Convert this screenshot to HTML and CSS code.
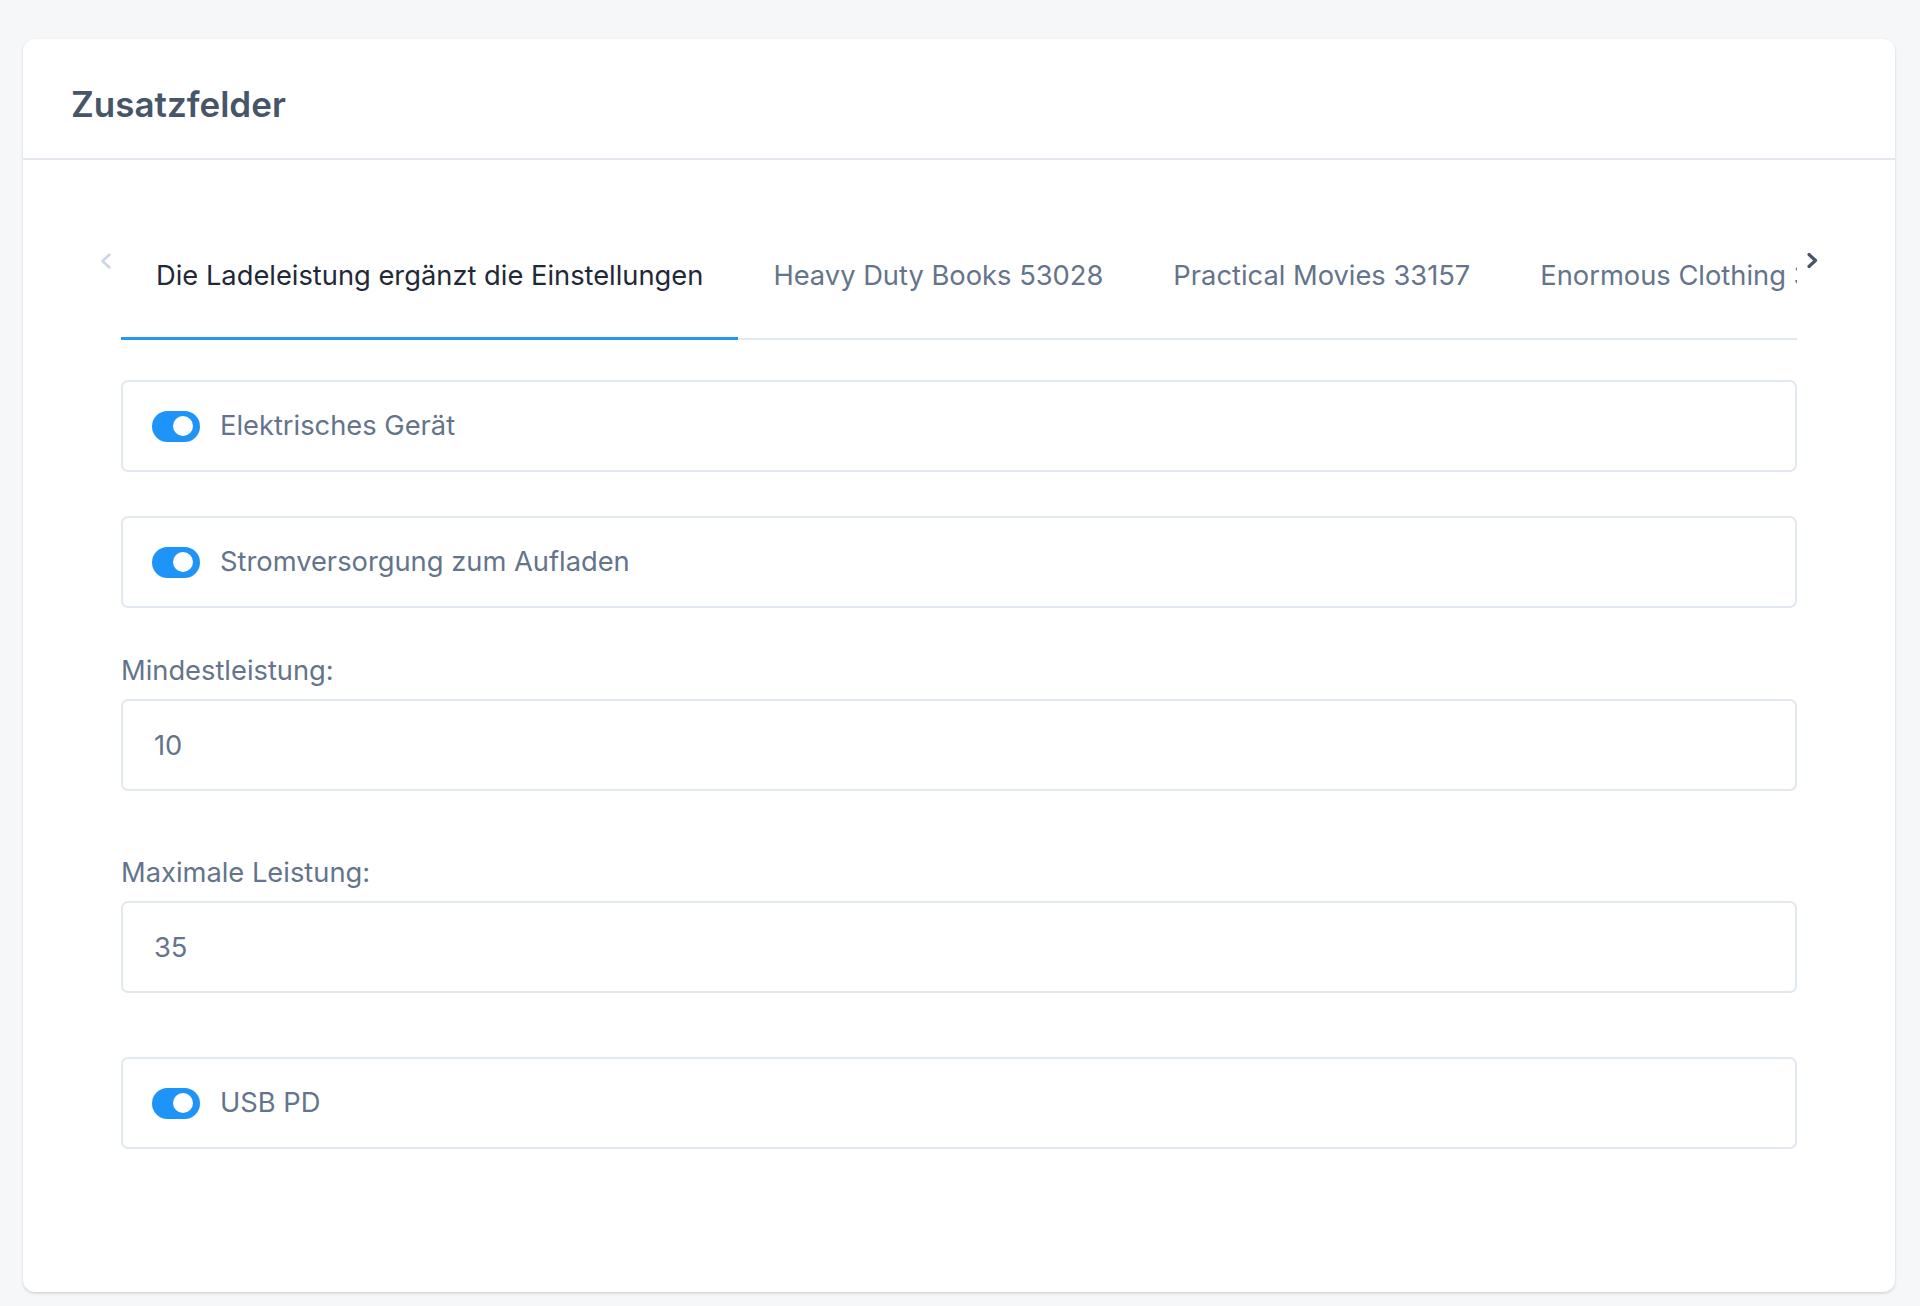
FILE: index.html
```html
<!DOCTYPE html>
<html lang="de">
<head>
<meta charset="utf-8">
<title>Zusatzfelder</title>
<link rel="stylesheet" href="styles.css">
</head>
<body>
<div class="page">
  <section class="card">
    <header class="card-header">
      <h2 class="card-title">Zusatzfelder</h2>
    </header>
    <div class="card-body">
      <div class="tabs">
        <button class="tab-arrow tab-arrow-prev" type="button" aria-label="Zurück">
          <svg width="14" height="18" viewBox="0 0 14 18"><polyline points="10.5,2.5 3.5,9 10.5,15.5" fill="none" stroke="currentColor" stroke-width="2.4" stroke-linecap="round" stroke-linejoin="round"/></svg>
        </button>
        <div class="tab-strip">
          <div class="tab active">Die Ladeleistung ergänzt die Einstellungen</div>
          <div class="tab">Heavy Duty Books 53028</div>
          <div class="tab">Practical Movies 33157</div>
          <div class="tab">Enormous Clothing 31942</div>
        </div>
        <button class="tab-arrow tab-arrow-next" type="button" aria-label="Weiter">
          <svg width="12" height="18" viewBox="0 0 12 18"><polyline points="3,2.5 9.5,8.5 3,14.5" fill="none" stroke="currentColor" stroke-width="3.2" stroke-linecap="round" stroke-linejoin="round"/></svg>
        </button>
      </div>

      <div class="switch-box">
        <span class="switch on"><span class="knob"></span></span>
        <span class="switch-label">Elektrisches Gerät</span>
      </div>

      <div class="switch-box">
        <span class="switch on"><span class="knob"></span></span>
        <span class="switch-label">Stromversorgung zum Aufladen</span>
      </div>

      <div class="field">
        <label class="field-label">Mindestleistung:</label>
        <input class="field-input" type="text" value="10">
      </div>

      <div class="field field-last">
        <label class="field-label">Maximale Leistung:</label>
        <input class="field-input" type="text" value="35">
      </div>

      <div class="switch-box last">
        <span class="switch on"><span class="knob"></span></span>
        <span class="switch-label">USB PD</span>
      </div>
    </div>
  </section>
</div>
</body>
</html>
```

FILE: styles.css
```css
* { box-sizing: border-box; }

html, body {
  margin: 0;
  padding: 0;
  background: #f6f7f9;
  font-family: Inter, "Noto Sans", "Liberation Sans", sans-serif;
}

.page {
  padding: 39px 25px 16px 23px;
}

.card {
  background: #ffffff;
  border-radius: 12px;
  box-shadow: 0 1px 3px rgba(15, 23, 42, 0.12), 0 2px 3px rgba(15, 23, 42, 0.05);
}

.card-header {
  height: 121px;
  padding: 44px 48px 0;
  border-bottom: 2px solid #e5e9ef;
}

.card-title {
  margin: 0;
  font-size: 35px;
  line-height: 42px;
  font-weight: 600;
  color: #475569;
}

.card-body {
  padding: 94px 98px 143px;
}

/* Tabs */
.tabs {
  display: flex;
  margin: 0 -30px 40px;
}

.tab-arrow {
  flex: 0 0 30px;
  align-self: flex-start;
  margin-top: -2px;
  padding: 0;
  border: 0;
  background: none;
  display: flex;
  justify-content: center;
  height: 20px;
}

.tab-arrow-prev { color: #cbd5e1; }
.tab-arrow-next { color: #475569; }

.tab-strip {
  flex: 1;
  display: flex;
  overflow: hidden;
  box-shadow: inset 0 -2px 0 #e2e8f0;
}

.tab {
  flex: 0 0 auto;
  padding: 1px 35px 40px;
  font-size: 27.3px;
  line-height: 42px;
  color: #64748b;
  white-space: nowrap;
  border-bottom: 3px solid transparent;
}

.tab.active {
  color: #1f2937;
  border-bottom-color: #2196f3;
}

/* Switch rows */
.switch-box {
  display: flex;
  align-items: center;
  height: 92px;
  padding: 0 29px;
  border: 2px solid #e2e8f0;
  border-radius: 7px;
  margin-bottom: 44px;
}

.switch-box.last { margin-bottom: 0; }

.switch {
  position: relative;
  flex: 0 0 48px;
  width: 48px;
  height: 31px;
  border-radius: 16px;
  background: #1e93f8;
  margin-right: 20px;
}

.knob {
  position: absolute;
  top: 5.5px;
  right: 7.5px;
  width: 20px;
  height: 20px;
  border-radius: 50%;
  background: #ffffff;
}

.switch-label {
  font-size: 27.3px;
  line-height: 42px;
  color: #64748b;
}

/* Fields */
.field {
  display: flex;
  flex-direction: column;
  margin-bottom: 63px;
}

.field.field-last { margin-bottom: 64px; }

.field-label {
  font-size: 27.3px;
  line-height: 38px;
  color: #64748b;
  margin-bottom: 9px;
}

.field-input {
  height: 92px;
  width: 100%;
  padding: 0 31px;
  border: 2px solid #e2e8f0;
  border-radius: 7px;
  font-family: inherit;
  font-size: 27.3px;
  color: #64748b;
  background: #fff;
  outline: none;
}
```
